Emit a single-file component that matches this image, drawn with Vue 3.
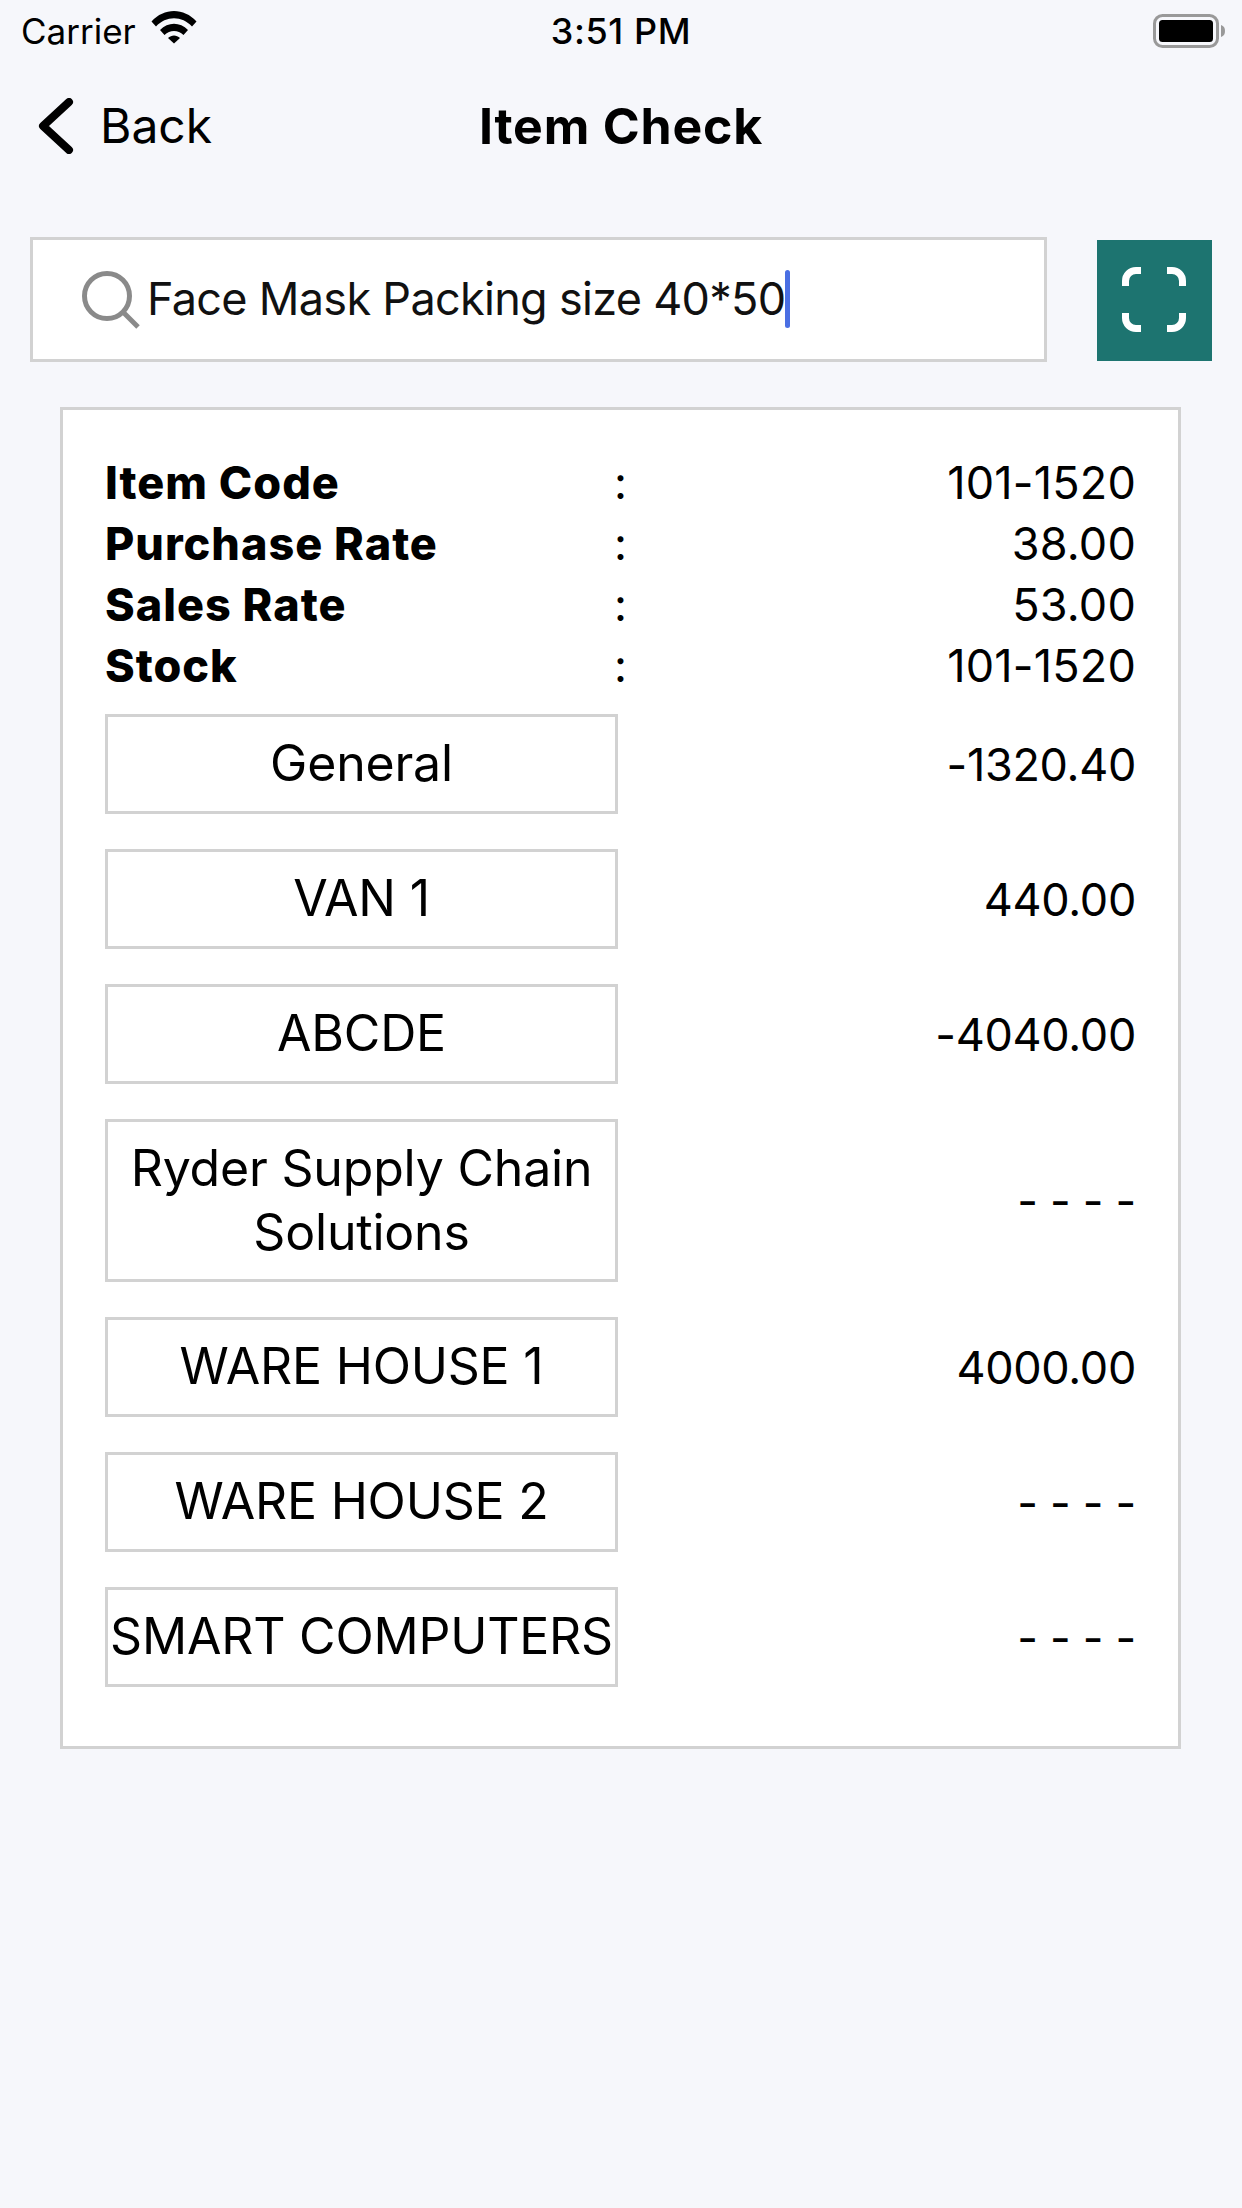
<script setup>
const summary = [
  { label: 'Item Code', value: '101-1520' },
  { label: 'Purchase Rate', value: '38.00' },
  { label: 'Sales Rate', value: '53.00' },
  { label: 'Stock', value: '101-1520' }
]

const stores = [
  { name: 'General', qty: '-1320.40' },
  { name: 'VAN 1', qty: '440.00' },
  { name: 'ABCDE', qty: '-4040.00' },
  { name: 'Ryder Supply Chain Solutions', qty: '- - - -' },
  { name: 'WARE HOUSE 1', qty: '4000.00' },
  { name: 'WARE HOUSE 2', qty: '- - - -' },
  { name: 'SMART COMPUTERS', qty: '- - - -' }
]
</script>

<template>
  <div class="screen">
    <!-- Status bar -->
    <div class="status-bar">
      <div class="status-left">
        <span class="carrier">Carrier</span>
        <svg class="wifi" viewBox="0 0 46 34">
          <path d="M0.5 11.5 C13 -2.5 33 -2.5 45.5 11.5 L41 16.5 C31 5.5 15 5.5 5 16.5 Z" />
          <path d="M9 20 C17 11.5 29 11.5 37 20 L32.5 25 C27 19.5 19 19.5 13.5 25 Z" />
          <path d="M17 28 C20.5 24.5 25.5 24.5 29 28 L23 33.5 Z" />
        </svg>
      </div>
      <span class="clock">3:51 PM</span>
      <svg class="battery" viewBox="0 0 74 36">
        <rect x="1.5" y="1.5" width="63" height="31" rx="8" class="battery-shell" />
        <rect x="6" y="6" width="54" height="22" rx="3.5" />
        <path d="M68 11 C71 12 72 14 72 17 C72 20 71 22 68 23 Z" class="battery-cap" />
      </svg>
    </div>

    <!-- Nav bar -->
    <div class="nav-bar">
      <div class="back">
        <svg class="chevron" viewBox="0 0 36 56">
          <path d="M31 4 L5 28 L31 52" />
        </svg>
        <span>Back</span>
      </div>
      <h1 class="nav-title">Item Check</h1>
    </div>

    <!-- Search -->
    <div class="search-row">
      <div class="search-box">
        <svg class="search-icon" viewBox="0 0 58 58">
          <circle cx="25" cy="25" r="22.5" />
          <path d="M41 41 L56 56" />
        </svg>
        <span class="search-text">Face Mask Packing size 40*50</span>
        <span class="caret"></span>
      </div>
      <div class="scan-btn">
        <svg class="scan-icon" viewBox="0 0 64 65">
          <path d="M3.5 19 V14 A10.5 10.5 0 0 1 14 3.5 H19" />
          <path d="M45 3.5 H50 A10.5 10.5 0 0 1 60.5 14 V19" />
          <path d="M3.5 46 V51 A10.5 10.5 0 0 0 14 61.5 H19" />
          <path d="M45 61.5 H50 A10.5 10.5 0 0 0 60.5 51 V46" />
        </svg>
      </div>
    </div>

    <!-- Result card -->
    <div class="card">
      <div class="summary">
        <div v-for="row in summary" :key="row.label" class="summary-row">
          <span class="summary-label">{{ row.label }}</span>
          <span class="summary-colon">:</span>
          <span class="summary-value">{{ row.value }}</span>
        </div>
      </div>
      <div class="stores">
        <div v-for="store in stores" :key="store.name" class="store-row">
          <div class="store-name">{{ store.name }}</div>
          <div class="store-qty">{{ store.qty }}</div>
        </div>
      </div>
    </div>
  </div>
</template>

<style>
html,
body {
  margin: 0;
  background: #f6f7fb;
}
</style>

<style scoped>
.screen {
  width: 1242px;
  height: 2208px;
  background: #f6f7fb;
  color: #000;
  font-family: Inter, "Liberation Sans", sans-serif;
  overflow: hidden;
  box-sizing: border-box;
}

.status-bar {
  height: 60px;
  display: grid;
  grid-template-columns: 1fr auto 1fr;
  align-items: center;
  padding: 0 15px 0 21px;
  box-sizing: border-box;
}

.status-left {
  display: flex;
  align-items: center;
  gap: 15px;
}

.carrier {
  font-size: 35px;
  line-height: 62px;
}

.wifi {
  width: 46px;
  height: 34px;
  margin-top: -8px;
  fill: #000;
}

.clock {
  font-size: 36px;
  font-weight: 500;
  letter-spacing: 0.6px;
  line-height: 62px;
  margin-right: 6px;
}

.battery {
  width: 74px;
  height: 36px;
  justify-self: end;
  margin-top: 2px;
}

.battery-shell {
  fill: none;
  stroke: #999;
  stroke-width: 3;
}

.battery-cap {
  fill: #999;
}

.nav-bar {
  position: relative;
  height: 72px;
  margin-top: 30px;
  display: flex;
  align-items: center;
  justify-content: center;
}

.back {
  position: absolute;
  left: 38px;
  top: 2px;
  display: flex;
  align-items: center;
  gap: 26px;
  font-size: 48px;
  line-height: 68px;
}

.chevron {
  width: 36px;
  height: 56px;
  fill: none;
  stroke: #000;
  stroke-width: 8;
  stroke-linecap: round;
  stroke-linejoin: round;
}

.nav-title {
  margin: 0;
  font-size: 50px;
  font-weight: 700;
  letter-spacing: 0.8px;
  line-height: 68px;
}

.search-row {
  display: flex;
  align-items: center;
  gap: 50px;
  margin: 75px 30px 0 30px;
}

.search-box {
  width: 1017px;
  height: 125px;
  flex-shrink: 0;
  display: flex;
  align-items: center;
  background: #fff;
  border: 3px solid #d2d2d2;
  box-sizing: border-box;
  padding-left: 49px;
}

.search-icon {
  width: 58px;
  height: 58px;
  fill: none;
  stroke: #8a8a8a;
  stroke-width: 5;
  flex-shrink: 0;
  margin-right: 7px;
}

.search-text {
  font-size: 45px;
  line-height: 56px;
  margin-top: -2px;
  letter-spacing: -0.7px;
  white-space: nowrap;
  color: #111;
}

.caret {
  width: 5px;
  height: 58px;
  margin-top: -2px;
  background: #4a6fe3;
  border-radius: 3px;
}

.scan-btn {
  width: 115px;
  height: 121px;
  margin-top: 2px;
  background: #1d7470;
  display: flex;
  align-items: center;
  justify-content: center;
}

.scan-icon {
  width: 64px;
  height: 65px;
  margin: -2px 2px 0 0;
  fill: none;
  stroke: #fff;
  stroke-width: 7;
}

.card {
  margin: 45px 61px 0 60px;
  padding: 42px 42px 59px 42px;
  background: #fff;
  border: 3px solid #d2d2d2;
  box-sizing: border-box;
}

.summary-row {
  display: grid;
  grid-template-columns: 513px 1fr;
  position: relative;
  height: 61px;
  align-items: center;
  font-size: 45px;
}

.summary-label {
  font-weight: 800;
  letter-spacing: 1px;
  grid-column: 1;
}

.summary-colon {
  position: absolute;
  left: 509px;
  width: 12px;
  text-align: center;
}

.summary-value {
  grid-column: 2;
  text-align: right;
  letter-spacing: 0.2px;
}

.stores {
  display: flex;
  flex-direction: column;
  gap: 35px;
  margin-top: 18px;
}

.store-row {
  display: grid;
  grid-template-columns: 513px 1fr;
  align-items: center;
  font-size: 50px;
}

.store-name {
  min-height: 100px;
  padding: 15px 0;
  border: 3px solid #d2d2d2;
  box-sizing: border-box;
  display: flex;
  align-items: center;
  justify-content: center;
  text-align: center;
  line-height: 63.5px;
  letter-spacing: -0.2px;
}

.store-qty {
  font-size: 45px;
  letter-spacing: -0.3px;
  text-align: right;
}
</style>
